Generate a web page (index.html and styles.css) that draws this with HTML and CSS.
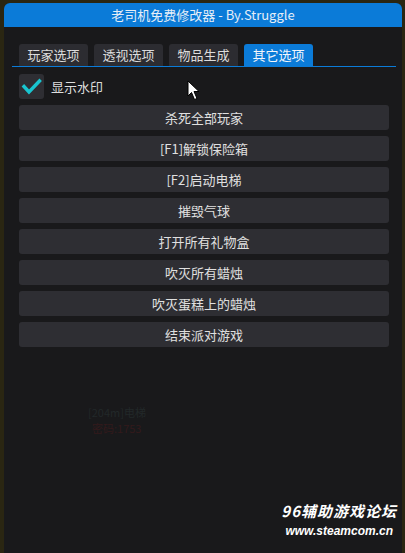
FILE: index.html
```html
<!DOCTYPE html>
<html lang="zh-CN">
<head>
    <meta charset="UTF-8">
    <meta name="viewport" content="width=device-width, initial-scale=1.0">
    <title>老司机免费修改器</title>
    <link rel="stylesheet" href="styles.css">
</head>
<body>
    <div class="window">
        <div class="titlebar">老司机免费修改器 - By.Struggle</div>
        <div class="tabs">
            <div class="tab">玩家选项</div>
            <div class="tab">透视选项</div>
            <div class="tab">物品生成</div>
            <div class="tab active">其它选项</div>
        </div>
        <label class="check-row">
            <span class="checkbox">
                <svg width="25" height="25" viewBox="0 0 25 25">
                    <polyline points="5,12.5 10,18 20.5,7" fill="none" stroke="#19c4cf" stroke-width="3.4" stroke-linecap="square"/>
                </svg>
            </span>
            <span class="check-label">显示水印</span>
        </label>
        <div class="buttons">
            <button class="btn">杀死全部玩家</button>
            <button class="btn">[F1]解锁保险箱</button>
            <button class="btn">[F2]启动电梯</button>
            <button class="btn">摧毁气球</button>
            <button class="btn">打开所有礼物盒</button>
            <button class="btn">吹灭所有蜡烛</button>
            <button class="btn">吹灭蛋糕上的蜡烛</button>
            <button class="btn">结束派对游戏</button>
        </div>
        <div class="ghost">
            <div class="ghost-name">[204m]电梯</div>
            <div class="ghost-code">密码:1753</div>
        </div>
        <div class="watermark">
            <div class="wm-title">96辅助游戏论坛</div>
            <div class="wm-url">www.steamcom.cn</div>
        </div>
        <svg class="cursor" width="14" height="21" viewBox="0 0 14 21">
            <path d="M1,1 L1,16 L4.5,12.5 L7.5,19.5 L10,18.5 L7,11.5 L12,11.5 Z" fill="#fff" stroke="#000" stroke-width="1"/>
        </svg>
    </div>
</body>
</html>
```

FILE: styles.css
```css
body {
    margin: 0;
    padding: 0;
    background-color: #2a2612;
    font-family: "Noto Sans CJK SC", "Noto Sans", sans-serif;
    width: 405px;
    height: 553px;
    overflow: hidden;
}
.window {
    position: relative;
    margin: 3px 0 0 4px;
    width: 398px;
    height: 556px;
    background-color: #19191b;
    border-radius: 6px;
    overflow: hidden;
}
.titlebar {
    height: 24px;
    line-height: 24px;
    background-color: #0b7bd8;
    color: #e6eef7;
    font-size: 13px;
    text-align: center;
}
.tabs {
    display: flex;
    gap: 6px;
    margin: 17px 6px 0 8px;
    padding-left: 7px;
    border-bottom: 1px solid #0b7bd8;
}
.tab {
    width: 69px;
    height: 22px;
    line-height: 22px;
    text-align: center;
    font-size: 13px;
    color: #dcdcdc;
    background-color: #2c2c31;
    border-radius: 3px 3px 0 0;
}
.tab.active {
    background-color: #0b7bd8;
    color: #f2f6fb;
}
.check-row {
    display: flex;
    align-items: center;
    gap: 7px;
    margin: 7px 0 0 15px;
}
.checkbox {
    width: 25px;
    height: 25px;
    background-color: #2e2e33;
    border-radius: 3px;
    display: flex;
}
.check-label {
    font-size: 13px;
    color: #dedede;
}
.buttons {
    display: flex;
    flex-direction: column;
    gap: 6px;
    margin: 6px 0 0 15px;
    width: 370px;
}
.btn {
    height: 25px;
    padding: 0;
    border: none;
    border-radius: 3px;
    background-color: #2e2e33;
    color: #e0e0e0;
    font-family: "Noto Sans CJK SC", "Noto Sans", sans-serif;
    font-size: 13px;
}
.ghost {
    margin: 57px 0 0 84px;
    font-size: 11px;
    line-height: 16px;
}
.ghost-name {
    color: #222829;
}
.ghost-code {
    color: #331a1c;
    margin-left: 4px;
}
.watermark {
    position: absolute;
    right: 5px;
    top: 498px;
    color: #ffffff;
    font-weight: bold;
    font-style: italic;
    text-align: right;
}
.wm-title {
    font-size: 15px;
    line-height: 20px;
    letter-spacing: 1px;
}
.wm-url {
    font-family: "Liberation Sans", sans-serif;
    font-size: 12px;
    line-height: 20px;
    margin-right: 4px;
}
.cursor {
    position: absolute;
    left: 183px;
    top: 77px;
}
```
